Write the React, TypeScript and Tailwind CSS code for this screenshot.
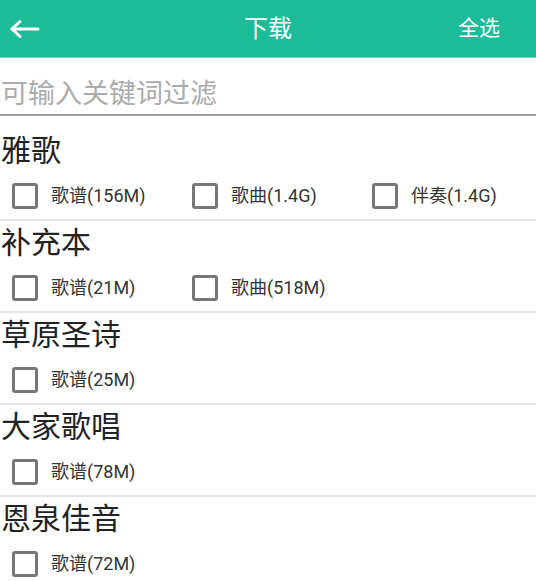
import React from "react";

type Section = { title: string; items: string[] };

const sections: Section[] = [
  { title: "雅歌", items: ["歌谱(156M)", "歌曲(1.4G)", "伴奏(1.4G)"] },
  { title: "补充本", items: ["歌谱(21M)", "歌曲(518M)"] },
  { title: "草原圣诗", items: ["歌谱(25M)"] },
  { title: "大家歌唱", items: ["歌谱(78M)"] },
  { title: "恩泉佳音", items: ["歌谱(72M)"] },
];

const font = { fontFamily: 'Roboto, "Noto Sans CJK SC", sans-serif' };

export default function App() {
  return (
    <div className="w-[536px] bg-white overflow-hidden" style={font}>
      {/* Header */}
      <div className="relative h-[58px] bg-[#1cbb99] border-b border-[#6fd6bf] flex items-center justify-between">
        <div className="w-[60px] h-full flex items-center pl-[10px]">
          <svg width="30" height="20" viewBox="0 0 30 20" fill="none">
            <path d="M2 10 H28" stroke="white" strokeWidth="3" strokeLinecap="round" />
            <path d="M10 2.5 L2 10 L10 17.5" stroke="white" strokeWidth="3" strokeLinecap="round" strokeLinejoin="round" />
          </svg>
        </div>
        <div className="absolute left-0 right-0 top-0 h-full flex items-center justify-center pointer-events-none">
          <span className="text-white text-[24px] leading-none">下载</span>
        </div>
        <span className="text-white text-[21px] leading-none pr-[36px]">全选</span>
      </div>

      {/* Search */}
      <div className="pt-[19px] pb-[3px] border-b-2 border-[#a0a0a0]">
        <input
          className="w-full h-[34px] px-[1px] text-[27px] leading-[34px] text-[#333] placeholder:text-[#ababab] outline-none bg-transparent"
          placeholder="可输入关键词过滤"
          style={font}
        />
      </div>

      {/* Sections */}
      <div className="pt-[13px]">
        {sections.map((s, i) => (
          <div key={s.title}>
            {i > 0 && <div className="h-[2px] bg-[#e6e6e6]" />}
            <div className="h-[42px] pt-[2px] leading-[40px] text-[30px] text-[#222] pl-[1px]">{s.title}</div>
            <div className="h-[48px] flex items-center pl-[12px] pt-[1px]">
              {s.items.map((it) => (
                <div key={it} className="w-[180px] shrink-0 flex items-center gap-[13px]">
                  <div className="w-[26px] h-[26px] border-[3px] border-[#777] rounded-[3px] shrink-0" />
                  <span className="text-[18px] text-[#333] leading-none">{it}</span>
                </div>
              ))}
            </div>
          </div>
        ))}
      </div>
    </div>
  );
}
